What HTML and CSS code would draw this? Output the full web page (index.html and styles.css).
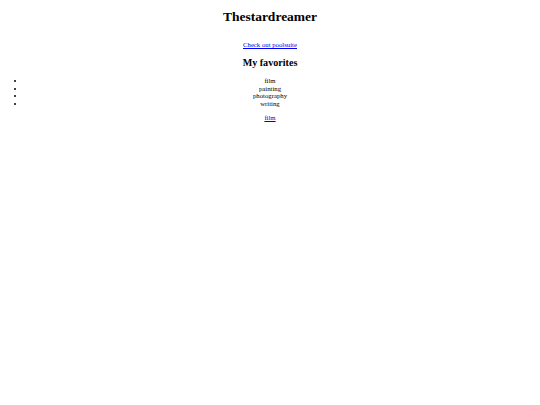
FILE: index.html
```html
<!DOCTYPE html>
<html lang="en">
<head>
<meta charset="utf-8">
<title>Thestardreamer</title>
<link rel="stylesheet" href="styles.css">
</head>
<body class="page">
<h1 class="title">Thestardreamer</h1>
<br>
<a class="link" href="#">Check out poolsuite</a>
<h2 class="subtitle">My favorites</h2>
<ul class="favorites">
<li>film</li>
<li>painting</li>
<li>photography</li>
<li>writing</li>
</ul>
<p class="para"><a class="link" href="#">film</a></p>
</body>
</html>
```

FILE: styles.css
```css
html {
  background: #ffffff;
}
.page {
  margin: 0 3.375px;
  font-family: "Liberation Serif", "Times New Roman", serif;
  font-size: 6.75px;
  line-height: 7.594px;
  color: #000000;
  text-align: center;
}
.title {
  font-size: 13.5px;
  line-height: 15.61px;
  font-weight: bold;
  margin: 9.045px 0;
}
.subtitle {
  font-size: 10.125px;
  line-height: 11.39px;
  font-weight: bold;
  margin: 8.404px 0;
}
.link {
  color: #0000ee;
  text-decoration: underline;
}
.favorites {
  margin: 6.75px 0;
  padding: 0 22px;
}
.para {
  margin: 6.75px 0;
}
```
